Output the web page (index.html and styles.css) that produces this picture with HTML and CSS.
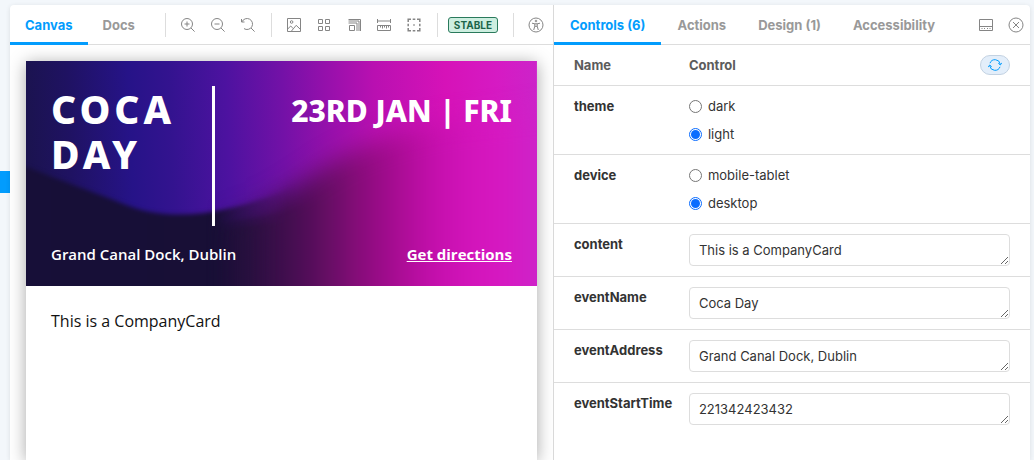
FILE: index.html
```html
<!DOCTYPE html>
<html lang="en">
<head>
<meta charset="utf-8">
<title>CompanyCard - Storybook</title>
<link rel="stylesheet" href="styles.css">
</head>
<body>
<div class="app">
  <nav class="sidebar" aria-label="Stories"><a class="sidebar-selected" href="#" aria-label="Selected story"></a></nav>
  <div class="workspace">
    <main class="preview">
      <div class="toolbar">
        <button class="tab tab-active" type="button">Canvas</button>
        <button class="tab" type="button">Docs</button>
        <span class="divider divider-first"></span>
        <div class="tools">
          <button class="tool" type="button" aria-label="Zoom in"><svg class="icon" viewBox="0 0 14 14"><circle cx="6" cy="6" r="5.5"/><path d="M3.5 6h5M6 3.5v5M10 10l3.6 3.6"/></svg></button>
          <button class="tool" type="button" aria-label="Zoom out"><svg class="icon" viewBox="0 0 14 14"><circle cx="6" cy="6" r="5.5"/><path d="M3.5 6h5M10 10l3.6 3.6"/></svg></button>
          <button class="tool" type="button" aria-label="Reset zoom"><svg class="icon" viewBox="0 0 14 14"><path d="M.5 1v3h3M1 3.8A5.5 5.5 0 1 1 3 10.6M10 10l3.6 3.6"/></svg></button>
        </div>
        <span class="divider"></span>
        <div class="tools">
          <button class="tool" type="button" aria-label="Change background"><svg class="icon" viewBox="0 0 14 14"><path d="M.5.5h13v13H.5zM.7 11l3-3 2.2 2.2M4.5 13l4.7-5.7 4.1 4"/><circle cx="4.6" cy="4" r="1.3"/></svg></button>
          <button class="tool" type="button" aria-label="Grid"><svg class="icon" viewBox="0 0 14 14"><path d="M1.5 1.5h4v4h-4zM8.500 1.5h4v4h-4zM1.5 8.500h4v4h-4zM8.500 8.500h4v4h-4z"/></svg></button>
          <button class="tool" type="button" aria-label="Viewport"><svg class="icon" viewBox="0 0 14 14"><path d="M2.500 7.500h5v5h-5zM1.500 5h8.500v8M1.500 3h10.500v10M1.500 1.500h12v11.500"/></svg></button>
          <button class="tool" type="button" aria-label="Measure"><svg class="icon" viewBox="0 0 14 14"><path d="M.5 1v4M13.5 1v4M.5 3h13M.5 7.5h13v5H.5zM3.5 7.5v2M5.5 7.5v3M7.5 7.5v2M9.5 7.5v3M11.5 7.5v2"/></svg></button>
          <button class="tool" type="button" aria-label="Outline"><svg class="icon" viewBox="0 0 14 14"><path class="bold" d="M1.200 4V1.200H4M10 1.200h2.800V4M12.800 10v2.800H10M4 12.800H1.200V10M5.700 1.200h2.600M5.700 12.800h2.600M1.200 5.700v2.600M12.800 5.700v2.600M6.300 7h1.400"/></svg></button>
        </div>
        <span class="divider"></span>
        <span class="badge">STABLE</span>
        <span class="divider divider-badge"></span>
        <button class="tool" type="button" aria-label="Vision simulator"><svg class="icon icon-lg" viewBox="0 0 16 16"><circle cx="8" cy="8" r="7"/><circle cx="8" cy="4" r=".8"/><path d="M4 6.2l2.8.6h2.4l2.8-.6M6.8 6.8v2.4L5.7 13M9.2 6.8v2.4l1.1 3.8M6.8 9.3h2.4"/></svg></button>
      </div>
      <div class="canvas">
        <article class="card">
          <header class="hero">
            <svg class="hero-art" viewBox="0 0 511 225" preserveAspectRatio="none" aria-hidden="true">
              <defs>
                <linearGradient id="sky" gradientUnits="userSpaceOnUse" x1="0" y1="20" x2="511" y2="0">
                  <stop offset="0" stop-color="#1b1350"/><stop offset=".08" stop-color="#1f1262"/><stop offset=".2" stop-color="#261388"/><stop offset=".28" stop-color="#33138f"/><stop offset=".39" stop-color="#4d12a0"/><stop offset=".5" stop-color="#7311a7"/><stop offset=".58" stop-color="#9310ab"/><stop offset=".68" stop-color="#b910b1"/><stop offset=".82" stop-color="#d612b8"/><stop offset=".92" stop-color="#d61ac3"/><stop offset="1" stop-color="#cc24c9"/>
                </linearGradient>
                <linearGradient id="wave" gradientUnits="userSpaceOnUse" x1="0" y1="0" x2="511" y2="0">
                  <stop offset="0" stop-color="#170f38"/><stop offset=".37" stop-color="#180f36"/><stop offset=".44" stop-color="#29103f"/><stop offset=".54" stop-color="#4c0d55"/><stop offset=".6" stop-color="#6b0e67"/><stop offset=".66" stop-color="#8b0c7d"/><stop offset=".72" stop-color="#a60c91"/><stop offset=".8" stop-color="#c50fad"/><stop offset=".88" stop-color="#d415bc"/><stop offset=".95" stop-color="#d61ac3"/><stop offset="1" stop-color="#cc24c9"/>
                </linearGradient>
                <linearGradient id="toRight" gradientUnits="userSpaceOnUse" x1="180" y1="0" x2="260" y2="0">
                  <stop offset="0" stop-color="#000"/><stop offset="1" stop-color="#fff"/>
                </linearGradient>
                <linearGradient id="toLeft" gradientUnits="userSpaceOnUse" x1="190" y1="0" x2="270" y2="0">
                  <stop offset="0" stop-color="#fff"/><stop offset="1" stop-color="#000"/>
                </linearGradient>
                <mask id="rightPart" maskUnits="userSpaceOnUse" x="0" y="0" width="511" height="225"><rect width="511" height="225" fill="url(#toRight)"/></mask>
                <mask id="leftPart" maskUnits="userSpaceOnUse" x="0" y="0" width="511" height="225"><rect width="511" height="225" fill="url(#toLeft)"/></mask>
                <filter id="crisp" x="-20%" y="-20%" width="140%" height="140%" color-interpolation-filters="sRGB"><feGaussianBlur stdDeviation="2"/></filter>
                <filter id="soft" x="-20%" y="-40%" width="140%" height="180%" color-interpolation-filters="sRGB"><feGaussianBlur stdDeviation="12"/></filter>
              </defs>
              <rect width="511" height="225" fill="url(#sky)"/>
              <path filter="url(#crisp)" fill="url(#wave)" d="M140 170C170 168 195 162 220 158C250 154 280 146 310 134L540 90V260H140z" opacity=".6"/>
              <path filter="url(#crisp)" fill="url(#wave)" d="M140 176C170 174 195 168 220 165C250 162 280 158 310 150L540 120V260H140z"/>
              <g mask="url(#leftPart)"><path filter="url(#crisp)" fill="url(#wave)" d="M-20 98C40 122 62 129 100 144C130 156 165 156 200 148C235 140 270 128 310 105L560 -10V260H-20z"/></g>
              <g mask="url(#rightPart)"><path filter="url(#soft)" fill="url(#wave)" d="M100 150C130 161 165 162 200 155C235 148 265 130 290 112C330 84 380 70 420 62L600 40V300H100z"/></g>
            </svg>
            <div class="hero-body">
              <div class="hero-top">
                <h1 class="hero-title">Coca Day</h1>
                <p class="hero-date">23RD JAN | FRI</p>
              </div>
              <div class="hero-bottom">
                <span>Grand Canal Dock, Dublin</span>
                <a class="directions" href="#">Get directions</a>
              </div>
            </div>
          </header>
          <p class="card-text">This is a CompanyCard</p>
        </article>
      </div>
    </main>
    <section class="addons" aria-label="Addons">
      <div class="toolbar">
        <button class="tab tab-active" type="button">Controls (6)</button>
        <button class="tab" type="button">Actions</button>
        <button class="tab" type="button">Design (1)</button>
        <button class="tab" type="button">Accessibility</button>
        <div class="tools tools-end">
          <button class="tool" type="button" aria-label="Change orientation"><svg class="icon" viewBox="0 0 14 14"><path d="M.5 1.500h13v11H.5zM.5 8.500h13"/><path d="M2.500 10.500h1M5 10.500h1M8 10.500h1M10.500 10.500h1"/></svg></button>
          <button class="tool" type="button" aria-label="Hide addons"><svg class="icon icon-lg" viewBox="0 0 16 16"><circle cx="8" cy="8" r="7"/><path d="M5 5l6 6M11 5l-6 6"/></svg></button>
        </div>
      </div>
      <table class="controls">
        <thead>
          <tr>
            <th class="name" scope="col">Name</th>
            <th scope="col"><div class="head"><span>Control</span><button class="reset" type="button" aria-label="Reset controls"><svg class="reset-icon" viewBox="0 0 14 14"><path d="M2 5.200A5.300 5.300 0 0 1 12.200 6M12 8.800A5.300 5.300 0 0 1 1.800 8"/><path d="M10.300 5.300l2 1.700 1.500-2.200M3.700 8.700L1.700 7 .2 9.200"/></svg></button></div></th>
          </tr>
        </thead>
        <tbody>
          <tr>
            <th class="name" scope="row">theme</th>
            <td><div class="options">
              <label class="option"><input class="radio" type="radio" name="theme"><span>dark</span></label>
              <label class="option"><input class="radio" type="radio" name="theme" checked><span>light</span></label>
            </div></td>
          </tr>
          <tr>
            <th class="name" scope="row">device</th>
            <td><div class="options">
              <label class="option"><input class="radio" type="radio" name="device"><span>mobile-tablet</span></label>
              <label class="option"><input class="radio" type="radio" name="device" checked><span>desktop</span></label>
            </div></td>
          </tr>
          <tr>
            <th class="name" scope="row"><label for="content">content</label></th>
            <td><textarea class="field" id="content" rows="1">This is a CompanyCard</textarea></td>
          </tr>
          <tr>
            <th class="name" scope="row"><label for="eventName">eventName</label></th>
            <td><textarea class="field" id="eventName" rows="1">Coca Day</textarea></td>
          </tr>
          <tr>
            <th class="name" scope="row"><label for="eventAddress">eventAddress</label></th>
            <td><textarea class="field" id="eventAddress" rows="1">Grand Canal Dock, Dublin</textarea></td>
          </tr>
          <tr>
            <th class="name" scope="row"><label for="eventStartTime">eventStartTime</label></th>
            <td><textarea class="field" id="eventStartTime" rows="1">221342423432</textarea></td>
          </tr>
        </tbody>
      </table>
    </section>
  </div>
</div>
</body>
</html>
```
FILE: styles.css
```css
* { box-sizing: border-box; }

body {
  margin: 0;
  background: #f3f7fb;
  color: #333;
  font: 13px/20px Inter, "Liberation Sans", sans-serif;
}

button { margin: 0; border: 0; background: none; font: inherit; cursor: pointer; }

.app { display: flex; min-height: 100vh; }

.sidebar { flex: none; width: 10px; padding-top: 171px; }
.sidebar-selected { display: block; height: 22px; background: #029cfd; }

.workspace {
  display: flex;
  flex: 1;
  min-width: 0;
  margin: 5px 4px 0 0;
  overflow: hidden;
  border-radius: 4px 4px 0 0;
  background: #fff;
  box-shadow: 0 1px 5px rgba(0, 0, 0, .1);
}

.preview { display: flex; flex: 544; flex-direction: column; min-width: 0; }
.addons { flex: 477; min-width: 0; border-left: 1px solid #d9d9d9; }

.toolbar {
  display: flex;
  flex: none;
  align-items: center;
  height: 40px;
  border-bottom: 1px solid #ddd;
  white-space: nowrap;
}

.tab {
  flex: none;
  align-self: stretch;
  margin-bottom: -1px;
  padding: 3px 15px 0;
  border-bottom: 3px solid transparent;
  color: #999;
  font-weight: 700;
}
.tab-active { border-bottom-color: #029cfd; color: #029cfd; }
.addons .tab { padding: 3px 16px 0; }

.tools { display: flex; gap: 2px; }
.tools-end { margin-left: auto; }
.tool {
  display: flex;
  flex: none;
  align-items: center;
  justify-content: center;
  width: 28px;
  height: 28px;
  padding: 0;
}
.icon { width: 14px; height: 14px; fill: none; stroke: #858585; }
.icon-lg { width: 16px; height: 16px; }
.icon .bold { stroke-width: 1.5; }

.divider { flex: none; width: 1px; height: 24px; margin: 0 8px 0 9px; background: #ddd; }
.divider-first, .divider-badge { margin-left: 15px; }

.badge {
  flex: none;
  margin-left: 2px;
  padding: 0 5px;
  border: 1px solid #2a7a5c;
  border-radius: 3px;
  background: #cdeee0;
  color: #1c6549;
  font-size: 10px;
  font-weight: 700;
  line-height: 14px;
}

.canvas { display: flex; flex: 1; padding: 16px 16px 0; overflow: hidden; }
.card { flex: 1; min-width: 0; background: #fff; box-shadow: 0 2px 16px rgba(0, 0, 0, .35); }

.hero { display: grid; color: #fff; font-family: "Noto Sans", sans-serif; }
.hero-art, .hero-body { grid-area: 1 / 1; }
.hero-art { width: 100%; height: 100%; min-height: 0; contain: size; }
.hero-body {
  z-index: 1;
  display: flex;
  flex-direction: column;
  gap: 16px;
  padding: 25px 25px 20px;
}
.hero-top { display: flex; align-items: flex-start; justify-content: space-between; }
.hero-title {
  width: 164px;
  min-height: 140px;
  margin: 0;
  border-right: 3px solid #fff;
  font-size: 39px;
  font-weight: 800;
  line-height: 45px;
  letter-spacing: 4px;
  text-transform: uppercase;
}
.hero-date { margin: 5px 0 0; font-size: 30px; font-weight: 800; line-height: 40px; white-space: nowrap; }
.hero-bottom {
  display: flex;
  justify-content: space-between;
  font: 600 15px/24px "Open Sans", sans-serif;
}
.directions { color: #fff; font-weight: 700; }

.card-text {
  margin: 0;
  padding: 23px 25px;
  color: #111;
  font: 16px/24px "Open Sans", sans-serif;
}

.controls { width: 100%; border-collapse: collapse; table-layout: fixed; }
.controls th, .controls td {
  padding: 10px 20px 10px 15px;
  border-bottom: 1px solid #ddd;
  text-align: left;
  vertical-align: top;
}
.controls tbody tr:last-child > * { border-bottom: 0; }
.controls .name { width: 120px; padding-right: 0; padding-left: 20px; }
.controls thead th { color: #5c5c5c; }

.head { display: flex; align-items: center; justify-content: space-between; }
.reset {
  display: flex;
  align-items: center;
  justify-content: center;
  width: 30px;
  height: 20px;
  padding: 0;
  border: 1px solid #c3d2e2;
  border-radius: 10px;
  background: #e3eefa;
}
.reset-icon { width: 14px; height: 14px; fill: none; stroke: #029cfd; }

.options { display: grid; gap: 8px; }
.option { display: flex; align-items: center; gap: 6px; }
.radio {
  flex: none;
  width: 13px;
  height: 13px;
  margin: 0;
  border: 1px solid #767676;
  border-radius: 50%;
  background: #fff;
  appearance: none;
}
.radio:checked { padding: 1px; border-color: #0a6cff; background: #0a6cff content-box; }

.field {
  display: block;
  width: 100%;
  height: 32px;
  margin: 0;
  padding: 5px 9px;
  overflow: hidden;
  border: 1px solid #ddd;
  border-radius: 4px;
  background: #fff;
  color: #333;
  font: inherit;
  resize: vertical;
}
```
